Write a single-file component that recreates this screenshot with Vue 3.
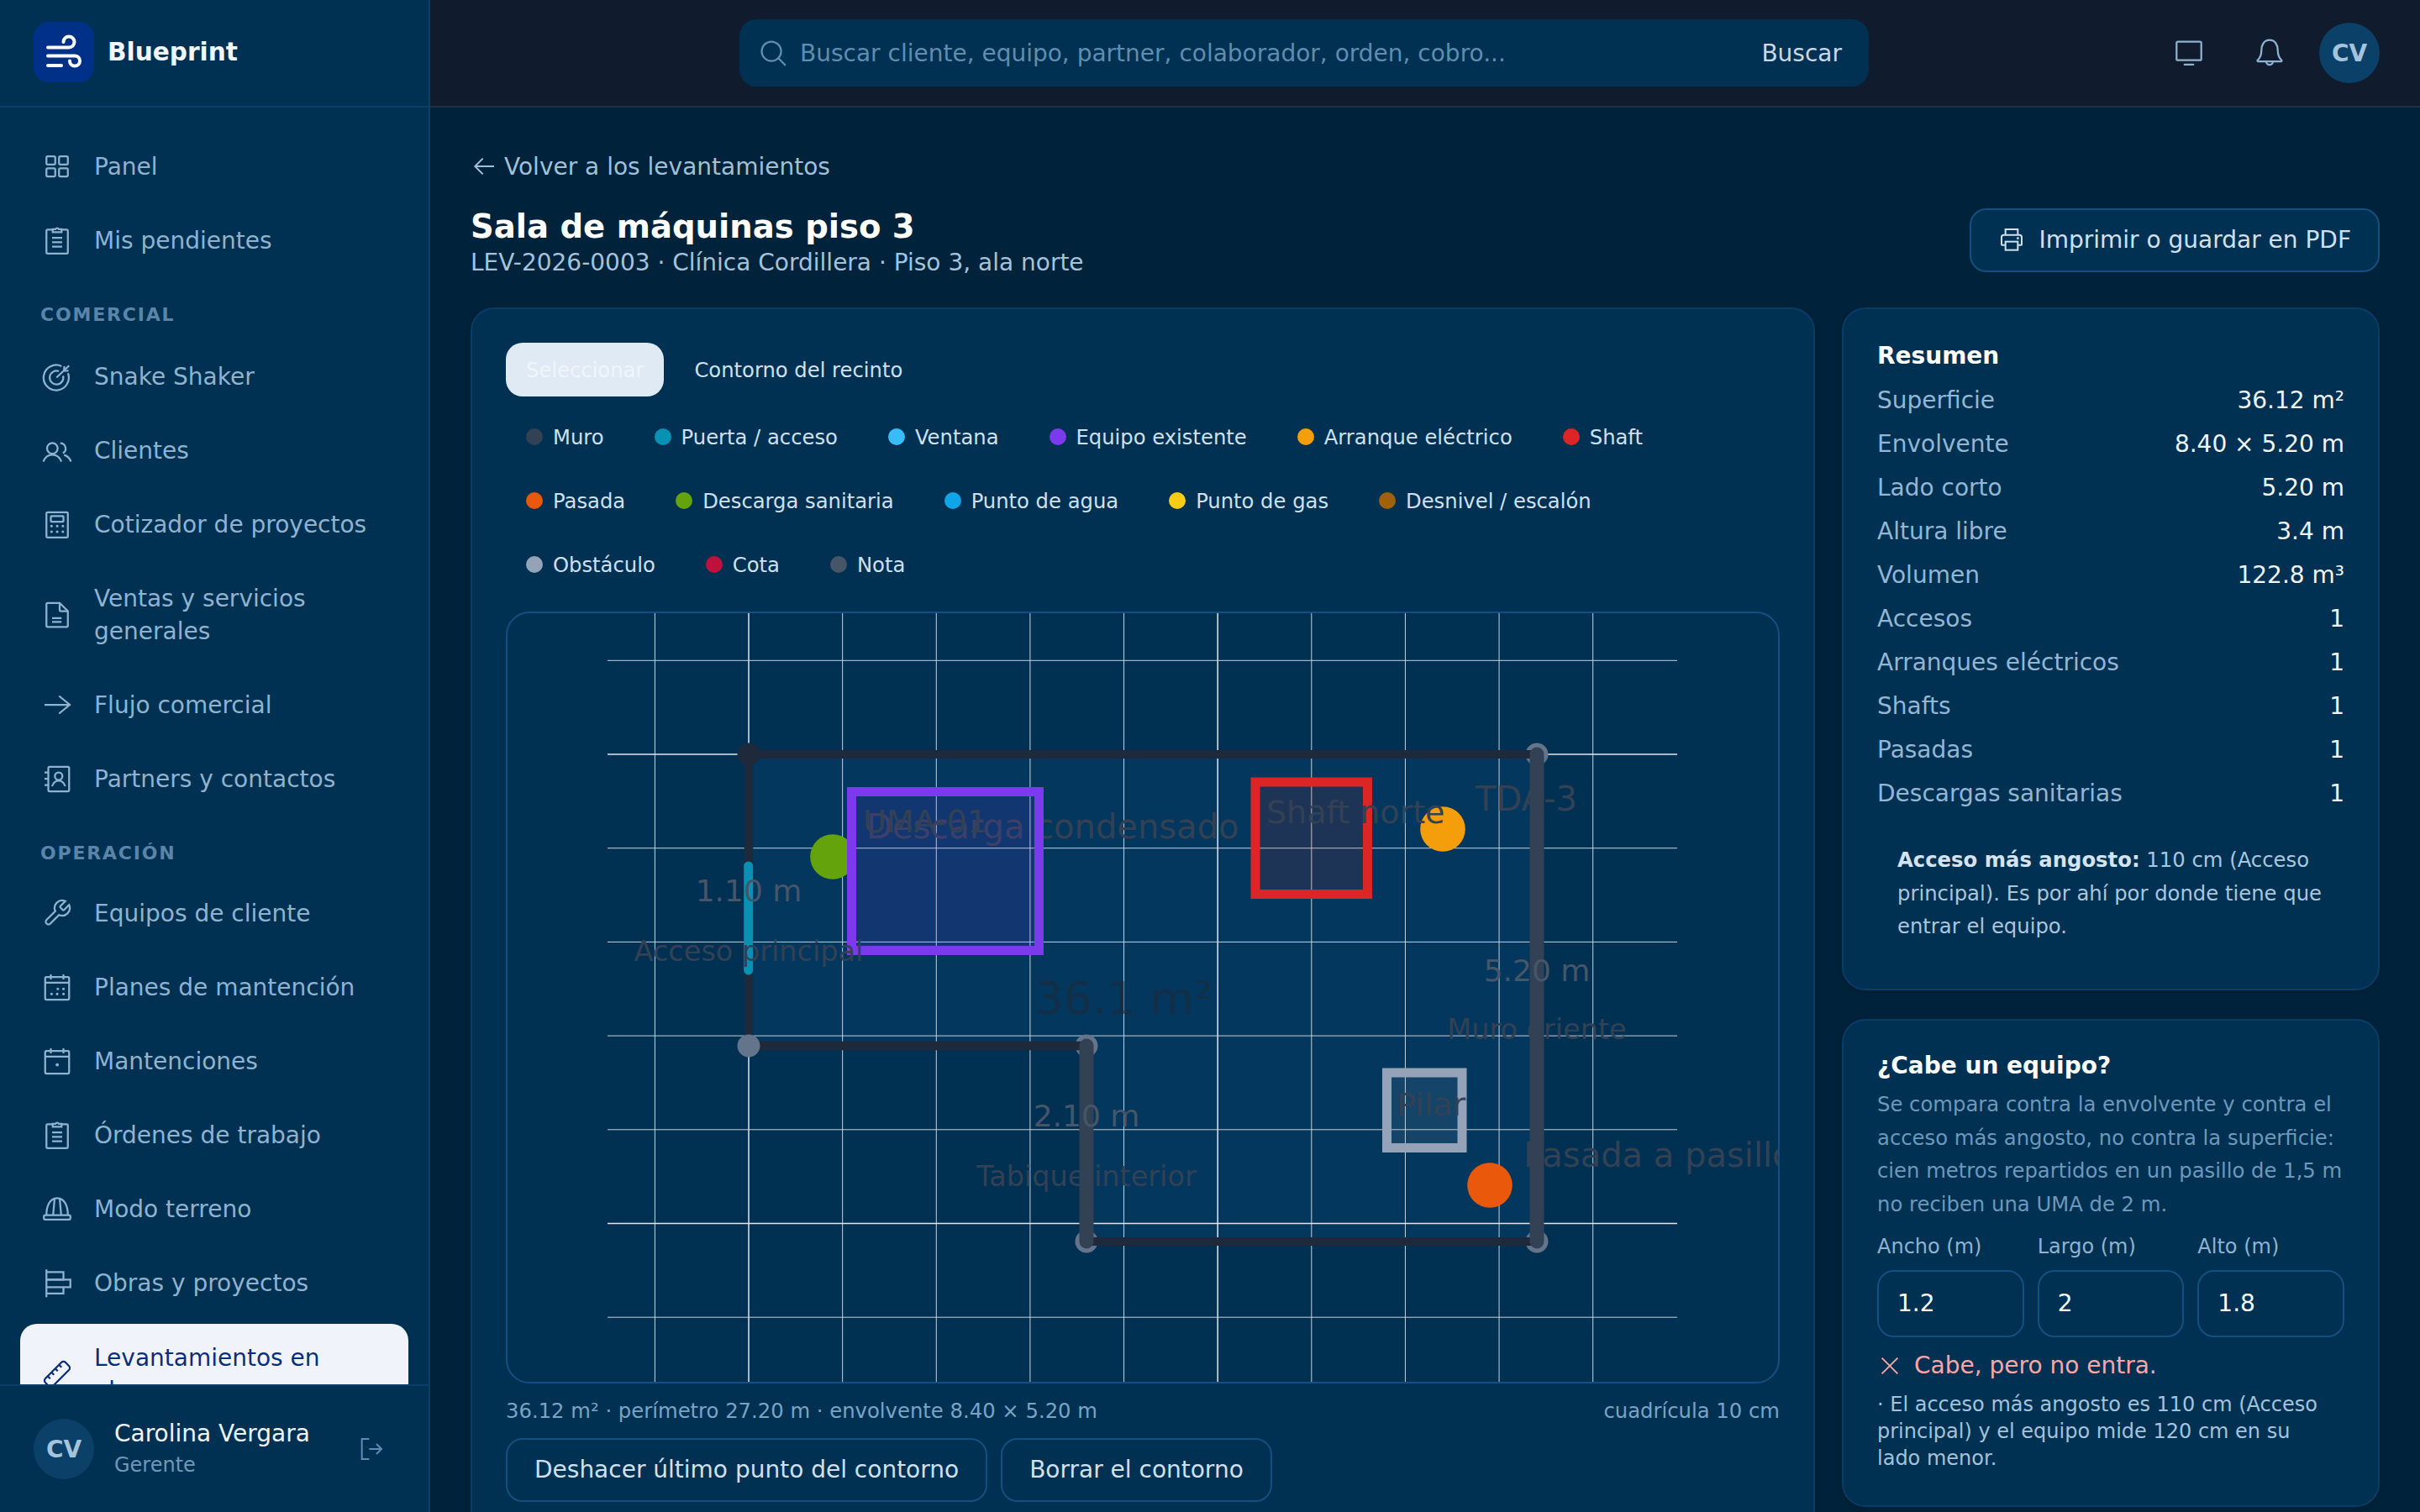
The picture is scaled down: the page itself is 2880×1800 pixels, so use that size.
<script setup>
const icons = {
  panel: '<rect x="3.5" y="4" width="7" height="6.5" rx="1"/><rect x="13.5" y="4" width="7" height="6.5" rx="1"/><rect x="3.5" y="13.5" width="7" height="6.5" rx="1"/><rect x="13.5" y="13.5" width="7" height="6.5" rx="1"/>',
  clip: '<path d="M8.5 3.5H4.5a1 1 0 0 0-1 1v17a1 1 0 0 0 1 1h15a1 1 0 0 0 1-1v-17a1 1 0 0 0-1-1h-4"/><path d="M8.5 5.5V3.2h2.2a1.5 1.5 0 0 1 2.6 0h2.2v2.3z"/><path d="M8 10h8M8 13.5h8M8 17h8"/>',
  target: '<path d="M20.6 9.5A10 10 0 1 1 15.5 4"/><path d="M16.7 11.6A5.4 5.4 0 1 1 13.4 8"/><path d="M11.5 13 21.5 3.5"/><path d="M17.7 4 17.5 7.6 21 7.6"/>',
  users: '<circle cx="8.2" cy="10.5" r="4.2"/><path d="M1 21c1.5-3.7 4-5.4 7.2-5.4s5.7 1.7 7.2 5.4"/><path d="M14.5 6.5a4.2 4.2 0 0 1 2 7.9"/><path d="M17.5 15.8c2.5.6 4.3 2.4 5.5 5.2"/>',
  calc: '<rect x="3.5" y="2.5" width="17" height="20" rx="1"/><rect x="7" y="5.5" width="10" height="4.5" rx=".5"/><path d="M7.5 13.5h.1M12 13.5h.1M16.5 13.5h.1M7.5 18h.1M12 18h.1M16.5 18h.1" stroke-width="2" stroke-linecap="round"/>',
  doc: '<path d="M14 2.5H4.5a1 1 0 0 0-1 1v17a1 1 0 0 0 1 1h15a1 1 0 0 0 1-1V9z"/><path d="M14 2.5V8a1 1 0 0 0 1 1h5.5"/><path d="M8 14.5h7.5M8 17.5h7.5"/>',
  arrow: '<path d="M2 12h20M13.5 5l8.5 7-8.5 7"/>',
  book: '<rect x="5" y="2.5" width="16.5" height="19.5" rx="1"/><circle cx="13.2" cy="10" r="3"/><path d="M8 18c1-3 3-4.5 5.2-4.5s4.2 1.5 5.2 4.5"/><path d="M2 7h3M2 12h3M2 17h3"/>',
  wrench: '<path d="M14.7 6.3a1 1 0 0 0 0 1.4l1.6 1.6a1 1 0 0 0 1.4 0l3.77-3.77a6 6 0 0 1-7.94 7.94l-6.91 6.91a2.12 2.12 0 0 1-3-3l6.91-6.91a6 6 0 0 1 7.94-7.94l-3.76 3.76z"/>',
  cal: '<rect x="2.5" y="4" width="19" height="18" rx="1"/><path d="M2.5 8.5h19M7 2v4M17 2v4"/><path d="M12.5 13.5h.1M17 13.5h.1M7.5 17.5h.1M12 17.5h.1M17 17.5h.1" stroke-width="2" stroke-linecap="round"/>',
  cal1: '<rect x="2.5" y="4" width="19" height="18" rx="1"/><path d="M2.5 8.5h19M7 2v4M17 2v4"/><path d="M12 15h.1" stroke-width="2.5" stroke-linecap="round"/>',
  hat: '<rect x="1.5" y="17" width="21" height="3.5" rx="1"/><path d="M3.5 17C3.5 10 6 3.5 12 3.5S20.5 10 20.5 17"/><path d="M10 3.7 8.8 17M14 3.7 15.2 17"/>',
  bars: '<path d="M3.5 1.5v22"/><path d="M3.5 3.5H17V9.5H3.5"/><path d="M3.5 9.5H22.5V15.5H3.5"/><path d="M17 15.5V20.5H3.5"/>',
  ruler: '<g transform="translate(24 0) scale(-1 1)"><path d="M21.3 15.3a2.4 2.4 0 0 1 0 3.4l-2.6 2.6a2.4 2.4 0 0 1-3.4 0L2.7 8.7a2.41 2.41 0 0 1 0-3.4l2.6-2.6a2.41 2.41 0 0 1 3.4 0z"/><path d="m14.5 12.5 2-2M11.5 9.5l2-2M8.5 6.5l2-2M17.5 15.5l2-2"/></g>'
}

const nav1 = [
  { t: 'Panel', i: 'panel' },
  { t: 'Mis pendientes', i: 'clip' }
]
const nav2 = [
  { t: 'Snake Shaker', i: 'target' },
  { t: 'Clientes', i: 'users' },
  { t: 'Cotizador de proyectos', i: 'calc' },
  { t: 'Ventas y servicios generales', i: 'doc' },
  { t: 'Flujo comercial', i: 'arrow' },
  { t: 'Partners y contactos', i: 'book' }
]
const nav3 = [
  { t: 'Equipos de cliente', i: 'wrench' },
  { t: 'Planes de mantención', i: 'cal' },
  { t: 'Mantenciones', i: 'cal1' },
  { t: 'Órdenes de trabajo', i: 'clip' },
  { t: 'Modo terreno', i: 'hat' },
  { t: 'Obras y proyectos', i: 'bars' }
]

const legend = [
  ['Muro', '#334155'], ['Puerta / acceso', '#0891b2'], ['Ventana', '#38bdf8'],
  ['Equipo existente', '#7c3aed'], ['Arranque eléctrico', '#f59e0b'], ['Shaft', '#dc2626'],
  ['Pasada', '#ea580c'], ['Descarga sanitaria', '#65a30d'], ['Punto de agua', '#0ea5e9'],
  ['Punto de gas', '#facc15'], ['Desnivel / escalón', '#a16207'],
  ['Obstáculo', '#94a3b8'], ['Cota', '#be123c'], ['Nota', '#475569']
]

const summary = [
  ['Superficie', '36.12 m²'], ['Envolvente', '8.40 × 5.20 m'], ['Lado corto', '5.20 m'],
  ['Altura libre', '3.4 m'], ['Volumen', '122.8 m³'], ['Accesos', '1'],
  ['Arranques eléctricos', '1'], ['Shafts', '1'], ['Pasadas', '1'], ['Descargas sanitarias', '1']
]

const fields = [['Ancho (m)', '1.2'], ['Largo (m)', '2'], ['Alto (m)', '1.8']]

const vLines = Array.from({ length: 11 }, (_, i) => ({ x: 779.4 + 111.63 * i, major: i % 5 === 1 }))
const hLines = Array.from({ length: 8 }, (_, i) => ({ y: 786.3 + 111.7 * i, major: i % 5 === 1 }))
</script>

<template>
  <div class="app">
    <aside class="side">
      <div class="brand">
        <div class="logo">
          <svg width="42" height="42" viewBox="0 0 42 42" fill="none" stroke="#fff" stroke-width="4" stroke-linecap="round">
            <path d="M2 15.5H27a6.5 6.5 0 1 0-6.5-6.5" />
            <path d="M2 25.5H34a6 6 0 1 1-6 6" />
            <path d="M2 37H18" />
          </svg>
        </div>
        <span class="brand-name">Blueprint</span>
      </div>
      <nav class="nav">
        <a v-for="n in nav1" :key="n.t" class="item">
          <svg class="ico" viewBox="0 0 24 24" v-html="icons[n.i]"></svg>
          <span>{{ n.t }}</span>
        </a>
        <div class="sec first">COMERCIAL</div>
        <a v-for="n in nav2" :key="n.t" class="item">
          <svg class="ico" viewBox="0 0 24 24" v-html="icons[n.i]"></svg>
          <span>{{ n.t }}</span>
        </a>
        <div class="sec">OPERACIÓN</div>
        <a v-for="n in nav3" :key="n.t" class="item">
          <svg class="ico" viewBox="0 0 24 24" v-html="icons[n.i]"></svg>
          <span>{{ n.t }}</span>
        </a>
        <a class="item active">
          <svg class="ico" viewBox="0 0 24 24" v-html="icons.ruler"></svg>
          <span>Levantamientos en obra</span>
        </a>
      </nav>
      <div class="user">
        <div class="avatar">CV</div>
        <div class="user-text">
          <div class="user-name">Carolina Vergara</div>
          <div class="user-role">Gerente</div>
        </div>
        <svg class="logout" viewBox="0 0 24 24" fill="none" stroke="currentColor" stroke-width="1.5">
          <path d="M10 3H3.5v18H10" />
          <path d="M10 12h11M16.5 7.5 21 12l-4.5 4.5" />
        </svg>
      </div>
    </aside>

    <div class="main">
      <header class="top">
        <div class="search">
          <svg class="s-ico" viewBox="0 0 24 24" fill="none" stroke="currentColor" stroke-width="1.5" stroke-linecap="round">
            <circle cx="10.7" cy="10.7" r="7.7" />
            <path d="M16.2 16.2 21.5 21.5" />
          </svg>
          <input class="s-input" type="text" placeholder="Buscar cliente, equipo, partner, colaborador, orden, cobro..." />
          <span class="s-btn">Buscar</span>
        </div>
        <div class="top-right">
          <svg class="top-ico" viewBox="0 0 24 24" fill="none" stroke="currentColor" stroke-width="1.5" stroke-linecap="round">
            <rect x="2.2" y="3" width="19.6" height="14.8" rx="1" />
            <path d="M8.5 21.2h7" />
          </svg>
          <svg class="top-ico bell" viewBox="0 0 24 24" fill="none" stroke="currentColor" stroke-width="1.5" stroke-linejoin="round">
            <path d="M12 1.8C7.5 1.8 5.5 5.8 5.5 10c0 4-1 6-3 7.7a.6.6 0 0 0 .4 1h18.2a.6.6 0 0 0 .4-1C19.5 16 18.5 14 18.5 10c0-4.2-2-8.2-6.500-8.200z" />
            <path d="M9.3 18.7a2.7 2.7 0 0 0 5.4 0" />
          </svg>
          <div class="avatar">CV</div>
        </div>
      </header>

      <main class="content">
        <a class="back">
          <svg class="back-ico" viewBox="0 0 24 24" fill="none" stroke="currentColor" stroke-width="1.5">
            <path d="M21 12H4M11 5l-7 7 7 7" />
          </svg>
          <span>Volver a los levantamientos</span>
        </a>
        <div class="head">
          <div>
            <h1>Sala de máquinas piso 3</h1>
            <p class="sub">LEV-2026-0003 · Clínica Cordillera · Piso 3, ala norte</p>
          </div>
          <button class="btn print">
            <svg class="print-ico" viewBox="0 0 24 24" fill="none" stroke="currentColor" stroke-width="1.5">
              <path d="M6.5 8V3h11v5" />
              <path d="M6.5 17H3.5a.5.5 0 0 1-.5-.5V10a2 2 0 0 1 2-2h14a2 2 0 0 1 2 2v6.5a.5.5 0 0 1-.5.5h-3" />
              <rect x="6.5" y="14" width="11" height="7.5" />
              <path d="M17.5 11h.1" stroke-linecap="round" stroke-width="2" />
            </svg>
            Imprimir o guardar en PDF
          </button>
        </div>

        <div class="cols">
          <section class="card editor">
            <div class="tools">
              <button class="tool on">Seleccionar</button>
              <button class="tool">Contorno del recinto</button>
            </div>
            <div class="legend">
              <button v-for="l in legend" :key="l[0]" class="chip">
                <i class="dot" :style="{ background: l[1] }"></i>{{ l[0] }}
              </button>
            </div>
            <div class="canvas">
              <svg class="plan" viewBox="604 730 1512 915" width="1512" height="915">
                <polygon class="room" points="891,898 1829,898 1829,1478 1293,1478 1293,1245 891,1245" />
                <g class="grid">
                  <line v-for="v in vLines" :key="'v' + v.x" :x1="v.x" :x2="v.x" y1="700" y2="1660" :class="{ major: v.major }" />
                  <line v-for="h in hLines" :key="'h' + h.y" x1="723" x2="1996" :y1="h.y" :y2="h.y" :class="{ major: h.major }" />
                </g>

                <circle class="node" cx="1829" cy="898" r="13.5" />
                <circle class="node" cx="1293" cy="1245" r="13.5" />
                <circle class="node" cx="1829" cy="1478" r="13.5" />
                <circle class="node" cx="1293" cy="1478" r="13.5" />

                <g fill="none" stroke-linecap="round">
                  <path d="M891 898H1829" stroke="#1e293b" stroke-width="10" />
                  <path d="M1293 1478H1829" stroke="#1e293b" stroke-width="10" />
                  <path d="M1293 1245H891V898" stroke="#1e293b" stroke-width="10.5" stroke-linejoin="round" />
                  <path d="M1829 898V1478" stroke="#334155" stroke-width="17" />
                  <path d="M1293 1245V1478" stroke="#334155" stroke-width="17" />
                  <path d="M890.7 1031V1155" stroke="#0891b2" stroke-width="11" />
                </g>
                <circle class="node" cx="891" cy="1245" r="13.5" />
                <circle cx="891" cy="898" r="13.5" fill="#1e293b" />

                <circle cx="991" cy="1020" r="26.8" fill="#65a30d" />
                <text class="lb" x="1031" y="998" font-size="40">Descarga condensado</text>
                <rect x="1013.5" y="942.5" width="223" height="189" fill="#7c3aed" fill-opacity=".13" stroke="#7c3aed" stroke-width="11" />
                <text class="lb" x="1027" y="991" font-size="38">UMA-01</text>

                <circle cx="1717" cy="987" r="26.8" fill="#f59e0b" />
                <rect x="1494" y="931" width="133.5" height="133.5" fill="#dc2626" fill-opacity=".13" stroke="#dc2626" stroke-width="11" />
                <text class="lb" x="1507" y="980" font-size="38">Shaft norte</text>
                <text class="lb" x="1756" y="965" font-size="40">TDA-3</text>

                <rect x="1650.5" y="1277" width="89.5" height="89.5" fill="#94a3b8" fill-opacity=".13" stroke="#94a3b8" stroke-width="11" />
                <text class="lb" x="1662" y="1328" font-size="38">Pilar</text>

                <circle cx="1773" cy="1411" r="26.8" fill="#ea580c" />
                <text class="lb" x="1813" y="1389" font-size="40">Pasada a pasillo</text>

                <text class="dim" x="891" y="1073" font-size="36" text-anchor="middle">1.10 m</text>
                <text class="lb" x="891" y="1144" font-size="33.5" text-anchor="middle">Acceso principal</text>
                <text class="dim" x="1293" y="1341" font-size="36" text-anchor="middle">2.10 m</text>
                <text class="lb" x="1293" y="1412" font-size="33.5" text-anchor="middle">Tabique interior</text>
                <text class="dim" x="1829" y="1168" font-size="36" text-anchor="middle">5.20 m</text>
                <text class="lb" x="1829" y="1237" font-size="33.5" text-anchor="middle">Muro oriente</text>
                <text class="area" x="1337" y="1207" font-size="54" text-anchor="middle">36.1 m²</text>
              </svg>
            </div>
            <div class="meta">
              <span>36.12 m² · perímetro 27.20 m · envolvente 8.40 × 5.20 m</span>
              <span>cuadrícula 10 cm</span>
            </div>
            <div class="actions">
              <button class="btn">Deshacer último punto del contorno</button>
              <button class="btn">Borrar el contorno</button>
            </div>
          </section>

          <div class="rail">
            <section class="card summary">
              <h2>Resumen</h2>
              <div v-for="r in summary" :key="r[0]" class="row">
                <span>{{ r[0] }}</span><b>{{ r[1] }}</b>
              </div>
              <p class="note"><strong>Acceso más angosto:</strong> 110 cm (Acceso principal). Es por ahí por donde tiene que entrar el equipo.</p>
            </section>

            <section class="card fit">
              <h2>¿Cabe un equipo?</h2>
              <p class="desc">Se compara contra la envolvente y contra el acceso más angosto, no contra la superficie: cien metros repartidos en un pasillo de 1,5 m no reciben una UMA de 2 m.</p>
              <div class="fields">
                <label v-for="f in fields" :key="f[0]" class="field">
                  <span>{{ f[0] }}</span>
                  <input type="text" :value="f[1]" />
                </label>
              </div>
              <div class="verdict">
                <svg class="x-ico" viewBox="0 0 24 24" fill="none" stroke="currentColor" stroke-width="1.5">
                  <path d="M4.5 4.5l15 15M19.5 4.5l-15 15" />
                </svg>
                <span>Cabe, pero no entra.</span>
              </div>
              <p class="reason">· El acceso más angosto es 110 cm (Acceso principal) y el equipo mide 120 cm en su lado menor.</p>
            </section>
          </div>
        </div>
      </main>
    </div>
  </div>
</template>

<style>
html, body { margin: 0; background: #00233b; }
</style>

<style scoped>
* { box-sizing: border-box; }
.app {
  display: flex;
  width: 2880px;
  height: 1800px;
  overflow: hidden;
  font-family: "DejaVu Sans", sans-serif;
  font-size: 28px;
  color: #dbe7f1;
}
.side {
  flex: 0 0 512px;
  height: 1800px;
  display: flex;
  flex-direction: column;
  background: #003153;
  border-right: 2px solid #0a3f69;
}
.brand {
  flex: 0 0 128px;
  display: flex;
  align-items: center;
  gap: 16px;
  padding: 0 40px 2px;
  border-bottom: 2px solid #0a3f69;
}
.logo {
  width: 72px;
  height: 72px;
  border-radius: 18px;
  background: #003087;
  display: flex;
  align-items: center;
  justify-content: center;
}
.brand-name { font-weight: 700; font-size: 29.6px; color: #f0f6fb; }
.nav {
  flex: 1;
  min-height: 0;
  overflow: hidden;
  display: flex;
  flex-direction: column;
  gap: 8px;
  padding: 30px 24px 0;
}
.item {
  flex: none;
  display: flex;
  align-items: center;
  gap: 26px;
  padding: 20.5px 26px;
  line-height: 39px;
  color: #8fb3cf;
  border-radius: 20px;
}
.item span { max-width: 330px; }
.item.active { background: #f0f4fa; color: #0a2f7a; margin-top: 1px; }
.ico {
  flex: 0 0 36px;
  width: 36px;
  height: 36px;
  fill: none;
  stroke: currentColor;
  stroke-width: 1.5;
}
.sec {
  flex: none;
  height: 64px;
  padding: 28px 0 0 24px;
  font-size: 22px;
  line-height: 26px;
  font-weight: 700;
  letter-spacing: 1.8px;
  color: #5a85a8;
}
.sec.first { height: 66px; }
.user {
  flex: 0 0 152px;
  display: flex;
  align-items: center;
  padding: 0 40px;
  background: #003153;
  border-top: 2px solid #0a3f69;
}
.avatar {
  flex: 0 0 72px;
  width: 72px;
  height: 72px;
  border-radius: 50%;
  background: #0b4068;
  color: #a5c4dc;
  font-weight: 700;
  font-size: 28px;
  display: flex;
  align-items: center;
  justify-content: center;
}
.user-text { margin-left: 24px; flex: 1; }
.user-name { color: #eef4f9; line-height: 38px; }
.user-role { color: #6f97b8; font-size: 24px; line-height: 36px; }
.logout { width: 32px; height: 32px; color: #5f8cb0; margin-right: 12px; }

.main { flex: 1; min-width: 0; height: 1800px; overflow: hidden; background: #00233b; }
.top {
  height: 128px;
  display: flex;
  align-items: center;
  padding: 0 48px 0 368px;
  background: #111b2e;
  border-bottom: 2px solid #262f40;
}
.search {
  width: 1344px;
  height: 80px;
  display: flex;
  align-items: center;
  padding: 0 32px 0 22px;
  border-radius: 20px;
  background: #003153;
}
.s-ico { width: 36px; height: 36px; color: #5f8db0; flex: none; }
.s-input {
  flex: 1;
  min-width: 0;
  margin-left: 14px;
  border: 0;
  outline: 0;
  background: none;
  padding: 0;
  font: inherit;
  color: #dbe7f1;
}
.s-input::placeholder { color: #5f8db0; opacity: 1; }
.s-btn { color: #c8d8e6; }
.top-right { margin-left: auto; display: flex; align-items: center; }
.top-ico { width: 36px; height: 36px; color: #8fb3cf; }
.top-ico.bell { margin-left: 60px; margin-right: 41px; }

.content { padding: 50px 48px 0; }
.back {
  height: 40px;
  display: flex;
  align-items: center;
  gap: 8px;
  color: #9fc0d8;
  margin-bottom: 30px;
}
.back-ico { width: 32px; height: 32px; }
.head { display: flex; justify-content: space-between; align-items: flex-start; margin-bottom: 34px; height: 84px; }
h1 { margin: 0; font-size: 38.6px; line-height: 44px; font-weight: 700; color: #fff; }
.sub { margin: 0; line-height: 42px; color: #a4c2da; }
.btn {
  height: 76px;
  display: inline-flex;
  align-items: center;
  padding: 0 32px 2px;
  border: 2px solid #14507f;
  border-radius: 20px;
  background: transparent;
  font: inherit;
  color: #d0e0ee;
}
.print { background: #003153; }
.print-ico { width: 32px; height: 32px; margin-right: 16px; }

.cols { display: grid; grid-template-columns: 1600px 640px; gap: 32px; align-items: start; }
.card {
  padding: 40px;
  border: 2px solid #083d68;
  border-radius: 28px;
  background: #003153;
  box-shadow: 0 2px 10px rgba(0, 0, 0, .18);
}
.tools { display: flex; gap: 12px; margin-bottom: 16px; }
.tool {
  height: 64px;
  padding: 0 24px;
  border: 0;
  border-radius: 20px;
  background: none;
  font: inherit;
  font-size: 24.25px;
  color: #cfe0f0;
}
.tool.on { background: #dfeaf5; color: #f0f5fa; }
.legend { display: flex; flex-wrap: wrap; gap: 12px; margin-bottom: 24px; }
.chip {
  height: 64px;
  display: inline-flex;
  align-items: center;
  padding: 0 24px;
  border: 0;
  border-radius: 20px;
  background: none;
  font: inherit;
  font-size: 24.25px;
  color: #cfe0f0;
}
.dot { width: 20px; height: 20px; border-radius: 50%; margin-right: 12px; }
.canvas {
  width: 1516px;
  height: 919px;
  border: 2px solid #14507f;
  border-radius: 28px;
  overflow: hidden;
  background: #003153;
}
.plan { display: block; }
.grid line { stroke: #c3d2e0; stroke-width: 1; }
.grid line.major { stroke: #dfe8f0; stroke-width: 1.5; }
.room { fill: #03375d; }
.node { fill: #64748b; }
.lb { fill: #334155; }
.dim { fill: #475569; }
.area { fill: #1e293b; fill-opacity: .6; }
.meta {
  display: flex;
  justify-content: space-between;
  margin-top: 17px;
  font-size: 24.3px;
  line-height: 32px;
  color: #7ba3c4;
}
.actions { display: flex; gap: 16px; margin-top: 16px; }

.rail { display: flex; flex-direction: column; gap: 34px; }
h2 { margin: 0; font-size: 28px; line-height: 28px; font-weight: 700; color: #fff; }
.summary { height: 813px; }
.summary h2 { margin-top: 2px; margin-bottom: 12px; }
.row { height: 52px; display: flex; align-items: center; justify-content: space-between; color: #93b6d2; }
.row b { font-weight: 400; color: #f0f5fa; }
.note { margin: 10px 0 0; padding: 24px; font-size: 24.3px; line-height: 39.5px; color: #a9c6dd; }
.note strong { color: #d4e3ef; }
.fit { height: 581px; }
.desc { margin: 12px 0 0; font-size: 24.3px; line-height: 39.5px; color: #6d98bb; }
.fields { display: grid; grid-template-columns: repeat(3, 1fr); gap: 16px; margin-top: 15px; }
.field { display: flex; flex-direction: column; gap: 12px; font-size: 24px; line-height: 32px; color: #8fb3cf; min-width: 0; }
.field input {
  width: 100%;
  height: 80px;
  padding: 0 22px 2px;
  border: 2px solid #14507f;
  border-radius: 20px;
  background: transparent;
  outline: 0;
  font: inherit;
  font-size: 28px;
  color: #fff;
}
.verdict { display: flex; align-items: center; gap: 14px; margin-top: 14px; color: #fca5a5; line-height: 40px; }
.x-ico { width: 30px; height: 30px; }
.reason { margin: 10px 12px 0 0; font-size: 24px; line-height: 32px; color: #a4c2da; }
</style>
